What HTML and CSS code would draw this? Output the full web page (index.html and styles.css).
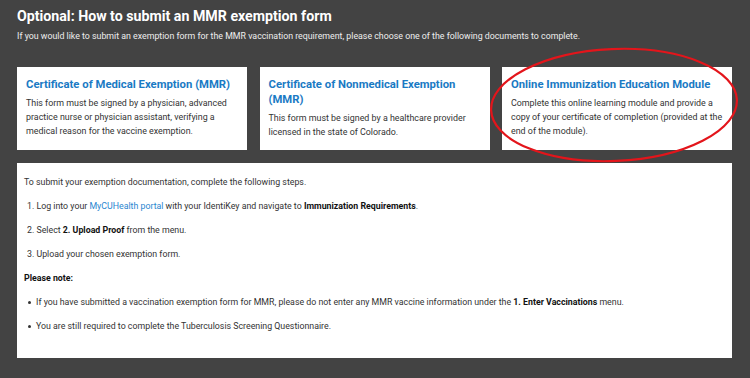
FILE: index.html
```html
<!DOCTYPE html>
<html lang="en">
<head>
<meta charset="UTF-8">
<title>MMR exemption form</title>
<link rel="stylesheet" href="styles.css">
</head>
<body>
<div class="page">
  <h2 class="title">Optional: How to submit an MMR exemption form</h2>
  <p class="intro">If you would like to submit an exemption form for the MMR vaccination requirement, please choose one of the following documents to complete.</p>

  <div class="cards">
    <div class="card">
      <h3>Certificate of Medical Exemption (MMR)</h3>
      <p>This form must be signed by a physician, advanced practice nurse or physician assistant, verifying a medical reason for the vaccine exemption.</p>
    </div>
    <div class="card">
      <h3>Certificate of Nonmedical Exemption (MMR)</h3>
      <p>This form must be signed by a healthcare provider licensed in the state of Colorado.</p>
    </div>
    <div class="card highlighted">
      <h3>Online Immunization Education Module</h3>
      <p>Complete this online learning module and provide a copy of your certificate of completion (provided at the end of the module).</p>
      <svg class="circle" width="270" height="130" viewBox="0 0 270 130">
        <ellipse cx="135" cy="65" rx="123" ry="56" transform="rotate(-2.5 135 65)" fill="none" stroke="#e3151b" stroke-width="2.2"/>
      </svg>
    </div>
  </div>

  <div class="steps">
    <p>To submit your exemption documentation, complete the following steps.</p>
    <ol>
      <li>1. Log into your <a href="#">MyCUHealth portal</a> with your IdentiKey and navigate to <b>Immunization Requirements</b>.</li>
      <li>2. Select <b>2. Upload Proof</b> from the menu.</li>
      <li>3. Upload your chosen exemption form.</li>
    </ol>
    <p><b>Please note:</b></p>
    <ul>
      <li>If you have submitted a vaccination exemption form for MMR, please do not enter any MMR vaccine information under the <b>1. Enter Vaccinations</b> menu.</li>
      <li>You are still required to complete the Tuberculosis Screening Questionnaire.</li>
    </ul>
  </div>
</div>
</body>
</html>
```

FILE: styles.css
```css
body {
  font-family: Roboto, "Liberation Sans", Arial, sans-serif;
  background: #434343;
  margin: 0;
}
.page {
  padding: 7px 18px 20px 17px;
}
.title {
  margin: 0;
  font-size: 14.2px;
  line-height: 18px;
  font-weight: 700;
  color: #fff;
}
.intro {
  margin: 5px 0 0;
  font-size: 8.8px;
  line-height: 12px;
  color: #eee;
}
.cards {
  display: flex;
  gap: 12.5px;
  margin-top: 25px;
}
.card {
  flex: 1;
  background: #fff;
  padding: 9.5px 7px 11px 9px;
  position: relative;
}
.card h3 {
  margin: 0 0 4px;
  font-size: 11.3px;
  line-height: 15px;
  font-weight: 700;
  color: #1a7ac4;
}
.card p {
  margin: 0;
  font-size: 8.9px;
  line-height: 14px;
  color: #333;
}
.circle {
  position: absolute;
  left: -23px;
  top: -27px;
  pointer-events: none;
}
.steps {
  margin-top: 13px;
  background: #fff;
  padding: 13.5px 7px 13.5px 7px;
  font-size: 8.8px;
  line-height: 13px;
  color: #333;
}
.steps p {
  margin: 0 0 11px;
}
.steps b {
  color: #111;
}
.steps a {
  color: #2a86d0;
  text-decoration: none;
}
.steps ol, .steps ul {
  margin: 0;
  padding: 0;
  list-style: none;
}
.steps li {
  margin: 0 0 11px 3px;
}
.steps ul li {
  position: relative;
  padding-left: 9px;
}
.steps ul li::before {
  content: "";
  position: absolute;
  left: 1px;
  top: 5px;
  width: 3px;
  height: 3px;
  border-radius: 50%;
  background: #333;
}
```
